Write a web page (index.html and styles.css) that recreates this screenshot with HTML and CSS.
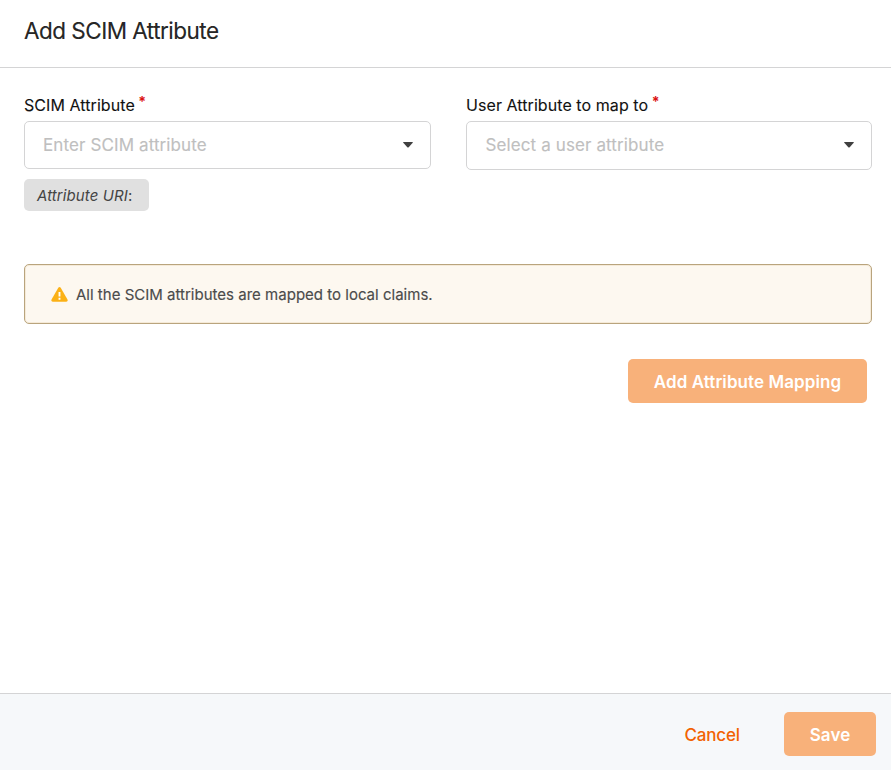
FILE: index.html
```html
<!DOCTYPE html>
<html lang="en">
<head>
<meta charset="utf-8">
<title>Add SCIM Attribute</title>
<link rel="stylesheet" href="styles.css">
</head>
<body>
<div class="modal">
  <header class="header"><h1 class="title">Add SCIM Attribute</h1></header>
  <main class="content">
    <div class="fields">
      <div class="field">
        <label class="label"><span class="label-text">SCIM Attribute</span><span class="required">*</span></label>
        <div class="select"><span class="placeholder">Enter SCIM attribute</span><svg class="caret" viewBox="0 0 10 6"><path d="M.6 0h8.8q.8 0 .3.7L5.7 5.2q-.7.7-1.4 0L.3.7Q-.2 0 .6 0Z"/></svg></div>
        <div class="uri"><span>Attribute URI</span>:</div>
      </div>
      <div class="field">
        <label class="label"><span class="label-text">User Attribute to map to</span><span class="required">*</span></label>
        <div class="select tall"><span class="placeholder">Select a user attribute</span><svg class="caret" viewBox="0 0 10 6"><path d="M.6 0h8.8q.8 0 .3.7L5.7 5.2q-.7.7-1.4 0L.3.7Q-.2 0 .6 0Z"/></svg></div>
      </div>
    </div>
    <div class="warning">
      <svg class="warning-icon" viewBox="0 0 18 16"><path class="triangle" d="M7.7.8Q9-.7 10.3.8l7.2 12.6q.8 2-1.3 2.2H1.8Q-.3 15.4.5 13.4Z"/><path class="mark" d="M9 5.3v4.9M9 11.5v2"/></svg>
      <span class="warning-text">All the SCIM attributes are mapped to local claims.</span>
    </div>
    <div class="mapping-action"><button class="button add">Add Attribute Mapping</button></div>
  </main>
  <footer class="footer"><button class="cancel">Cancel</button><button class="button save">Save</button></footer>
</div>
</body>
</html>
```
FILE: styles.css
```css
* { box-sizing: border-box; }
body { margin: 0; background: #fff; color: rgba(0,0,0,.87); font-family: Inter, sans-serif; }
button { border: 0; padding: 0; font-family: inherit; }
.modal { width: 100%; height: 770px; display: flex; flex-direction: column; }
.header { height: 68px; border-bottom: 1px solid #d4d4d5; padding: 17px 24px; }
.title { margin: 0; font-size: 22.5px; line-height: 28px; font-weight: 400; letter-spacing: -.52px; -webkit-text-stroke: .2px; }
.content { flex: 1; padding: 27px 19px 0 24px; }
.fields { display: grid; grid-template-columns: 407px 406px; column-gap: 35px; height: 169px; }
.label { display: flex; height: 26px; font-size: 16px; line-height: 20px; color: #111; }
.label-text { letter-spacing: .07px; -webkit-text-stroke: .1px; }
.required { color: #db1212; margin-left: 3.5px; font-size: 14px; font-weight: 700; line-height: 14px; }
.select { height: 48px; border: 1px solid #d4d4d5; border-radius: 5px; padding: 0 17px 0 18px; display: flex; align-items: center; justify-content: space-between; font-size: 17px; color: #bfbfbf; }
.placeholder { letter-spacing: .11px; -webkit-text-stroke: .15px; }
.tall { height: 49px; padding-bottom: 1px; padding-left: 18.5px; }
.caret { width: 10px; height: 6px; fill: #404040; }
.uri { width: 125px; height: 32px; margin-top: 10px; padding-left: 13px; border-radius: 5px; background: #e0e0e0; color: #444; font-size: 15px; line-height: 33px; letter-spacing: .1px; white-space: nowrap; }
.uri span { font-style: italic; }
.warning { height: 60px; border: 1px solid #b9a47d; border-radius: 5px; background: #fdf8f0; box-shadow: inset 0 0 0 1px #f5ead8; padding-left: 26px; display: flex; align-items: center; color: #4b4b4b; font-size: 15px; }
.warning-icon { width: 17px; height: 15px; margin-right: 8px; }
.warning-text { letter-spacing: .01px; -webkit-text-stroke: .15px; }
.triangle { fill: #fbb116; }
.mark { stroke: #fff; stroke-width: 2; }
.mapping-action { margin: 35px 5px 0 0; display: flex; justify-content: flex-end; }
.button { height: 44px; border-radius: 5px; background: #f8b17a; color: #fff; font-size: 17px; font-weight: 600; letter-spacing: .08px; padding-top: 1px; }
.add { width: 239px; }
.footer { height: 77px; border-top: 1px solid #d4d4d5; background: #f6f8fa; padding-right: 15px; display: flex; align-items: center; justify-content: flex-end; }
.cancel { background: transparent; color: #f26202; font-size: 17px; font-weight: 500; letter-spacing: -.15px; margin: 5px 44px 0 0; }
.save { width: 92px; margin-top: 4px; }
```
